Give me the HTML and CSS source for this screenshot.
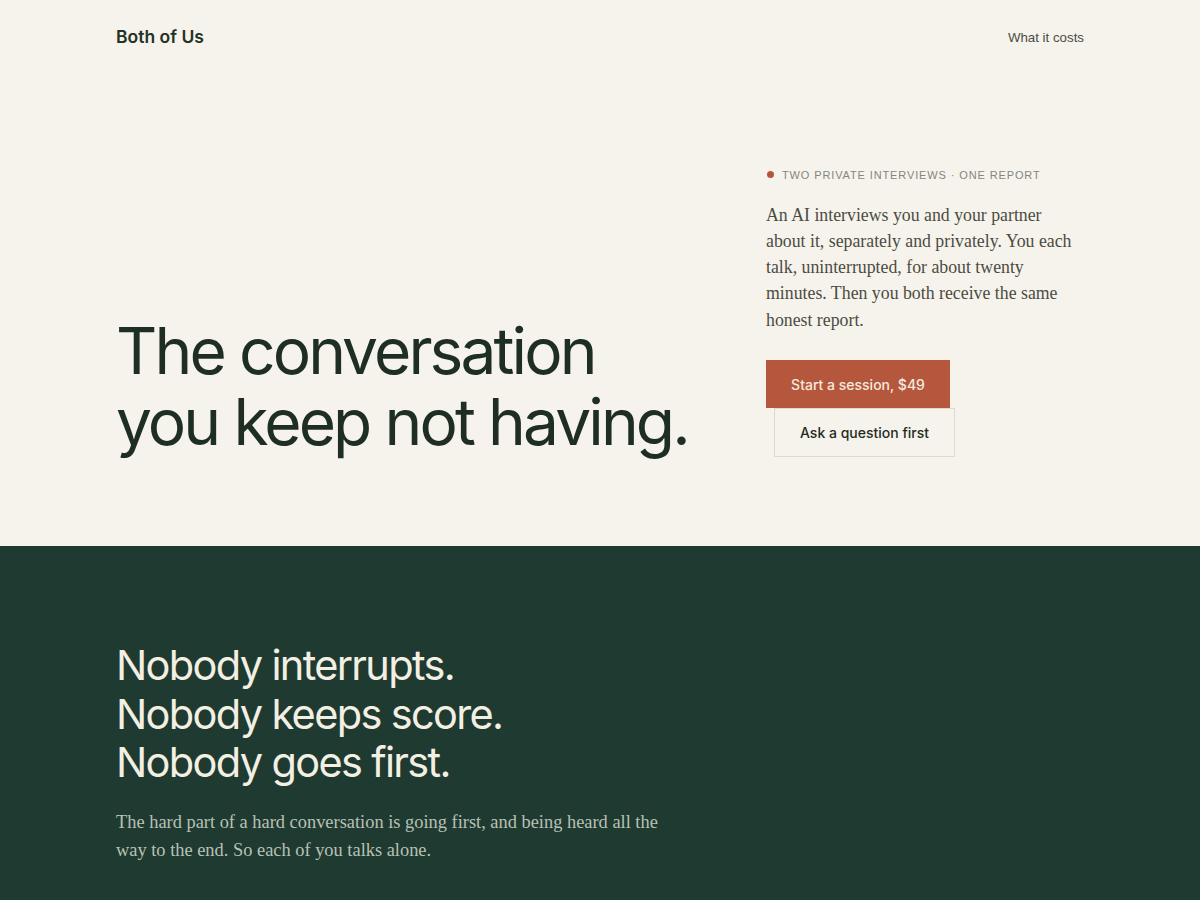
FILE: index.html
```html
<!DOCTYPE html>
<html lang="en">
<head>
<meta charset="utf-8">
<title>Both of Us</title>
<link rel="stylesheet" href="styles.css">
</head>
<body>
<header class="site-header">
  <div class="container header-inner">
    <a class="brand" href="#">Both of Us</a>
    <nav class="nav"><a href="#">What it costs</a></nav>
  </div>
</header>
<section class="hero">
  <div class="container hero-inner">
    <h1 class="hero-title"><span class="line">The conversation</span><span class="line">you keep not having.</span></h1>
    <div class="hero-side">
      <p class="eyebrow"><span class="dot"></span>Two private interviews · One report</p>
      <p class="lede">An AI interviews you and your partner about it, separately and privately. You each talk, uninterrupted, for about twenty minutes. Then you both receive the same honest report.</p>
      <div class="actions">
        <a class="btn btn-primary" href="#">Start a session, $49</a>
        <a class="btn btn-ghost" href="#">Ask a question first</a>
      </div>
    </div>
  </div>
</section>
<section class="dark">
  <div class="container">
    <h2 class="dark-title"><span class="line">Nobody interrupts.</span><span class="line">Nobody keeps score.</span><span class="line">Nobody goes first.</span></h2>
    <p class="dark-copy">The hard part of a hard conversation is going first, and being heard all the way to the end. So each of you talks alone.</p>
  </div>
</section>
</body>
</html>
```
FILE: styles.css
```css
* { box-sizing: border-box; }
html, body { margin: 0; padding: 0; }
body {
  background: #f6f3ec;
  color: #1f2b22;
  font-family: Inter, "Liberation Sans", sans-serif;
}
a { color: inherit; text-decoration: none; }
.container { width: 968px; margin: 0 auto; }
.line { display: block; }

.site-header { height: 76px; }
.header-inner {
  display: flex;
  justify-content: space-between;
  align-items: center;
  height: 72px;
}
.brand { font-size: 17.5px; font-weight: 600; letter-spacing: 0; color: #243126; }
.nav a { font-family: "Liberation Sans", sans-serif; font-size: 13.3px; color: #4a4c44; }

.hero { padding: 0 0 89px; }
.hero-inner {
  display: flex;
  justify-content: space-between;
  align-items: flex-end;
  min-height: 381px;
}
.hero-title {
  margin: 0;
  font-size: 64px;
  line-height: 71px;
  font-weight: 400;
  letter-spacing: -0.045em;
  color: #1f2e22;
}
.hero-side { width: 318px; }
.eyebrow {
  margin: 0 0 21px;
  display: flex;
  align-items: center;
  gap: 8px;
  font-family: "Liberation Sans", sans-serif;
  font-size: 11px;
  letter-spacing: 0.08em;
  text-transform: uppercase;
  color: #85867c;
}
.dot { width: 7px; height: 7px; border-radius: 50%; background: #b5563c; margin-left: 1px; }
.lede {
  margin: 0 0 27px;
  font-family: "Liberation Serif", serif;
  font-size: 17.8px;
  line-height: 26.3px;
  color: #4b4c42;
}
.actions { display: flex; flex-wrap: wrap; width: 200px; }
.btn {
  display: inline-flex;
  align-items: center;
  justify-content: center;
  height: 48px;
  font-size: 14px;
  font-weight: 500;
}
.btn-primary { background: #b5573d; color: #f6e9df; width: 184px; }
.btn-ghost { margin-left: 8px; width: 181px; height: 49px; border: 1px solid #dcdad2; color: #1f2b22; }

.dark { background: #1f3a30; padding: 95px 0 40px; min-height: 354px; }
.dark-title {
  margin: 0 0 21px;
  font-size: 41.5px;
  line-height: 48.5px;
  font-weight: 400;
  letter-spacing: -0.04em;
  color: #f3efe3;
}
.dark-copy {
  margin: 0;
  max-width: 560px;
  font-family: "Liberation Serif", serif;
  font-size: 18.4px;
  line-height: 28px;
  color: #b8c1b6;
}
```
